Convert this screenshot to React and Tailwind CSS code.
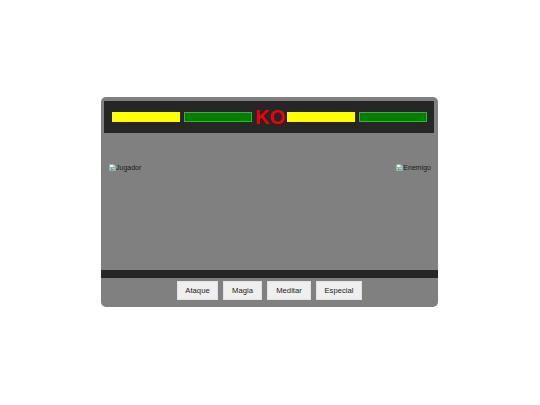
import React from "react";

function BrokenImg({ label }) {
  return (
    <div className="flex items-center" style={{ fontFamily: '"Liberation Sans", Arial, sans-serif' }}>
      <svg width="7" height="7" viewBox="0 0 14 14">
        <path d="M1 1 H9 L13 5 V13 H1 Z" fill="#f4f4f4" stroke="#9a9a9a" strokeWidth="1" />
        <path d="M9 1 V5 H13" fill="#dcdcdc" stroke="#9a9a9a" strokeWidth="1" />
        <rect x="2" y="6" width="10" height="3" fill="#7ab0e6" />
        <path d="M2 12 L5 8 L8 11 L10 9 L12 12 Z" fill="#4caf50" />
      </svg>
      <span className="text-[7px] leading-none text-[#1a1a1a]">{label}</span>
    </div>
  );
}

function Bar({ color }) {
  return color === "yellow" ? (
    <div className="w-[68px] h-[10px] bg-[#ffff00]" />
  ) : (
    <div className="w-[68px] h-[10px] bg-[#008000] border border-[#4aa44a]" />
  );
}

export default function App() {
  const buttons = [
    ["Ataque", "w-[41px]"],
    ["Magia", "w-[39px]"],
    ["Meditar", "w-[44px]"],
    ["Especial", "w-[46px]"],
  ];
  return (
    <div
      className="w-[540px] h-[405px] bg-white pt-[97px] pl-[101px]"
      style={{ fontFamily: '"Liberation Sans", Arial, sans-serif' }}
    >
      <div className="w-[337px] h-[210px] bg-[#808080] rounded-[5px] flex flex-col overflow-hidden">
        <div className="ml-[3px] mr-[4px] mt-[4px] h-[32px] bg-[#262626] flex items-center pl-[8px]">
          <Bar color="yellow" />
          <div className="w-[4px]" />
          <Bar color="green" />
          <div className="w-[3px]" />
          <span className="text-[20px] font-bold leading-none text-[#f00000] w-[30px]">KO</span>
          <div className="w-[2px]" />
          <Bar color="yellow" />
          <div className="w-[4px]" />
          <Bar color="green" />
        </div>
        <div className="h-[137px] flex justify-between items-start pl-[8px] pr-[7px] pt-[31px]">
          <BrokenImg label="Jugador" />
          <BrokenImg label="Enemigo" />
        </div>
        <div className="h-[8px] bg-[#262626]" />
        <div className="flex-1 flex justify-center items-start gap-[5px] pt-[3px]">
          {buttons.map(([t, w]) => (
            <div
              key={t}
              className={`${w} h-[19px] bg-[#efefef] border border-[#e2e2e2] flex items-center justify-center text-[7.7px] text-[#222]`}
            >
              {t}
            </div>
          ))}
        </div>
      </div>
    </div>
  );
}
